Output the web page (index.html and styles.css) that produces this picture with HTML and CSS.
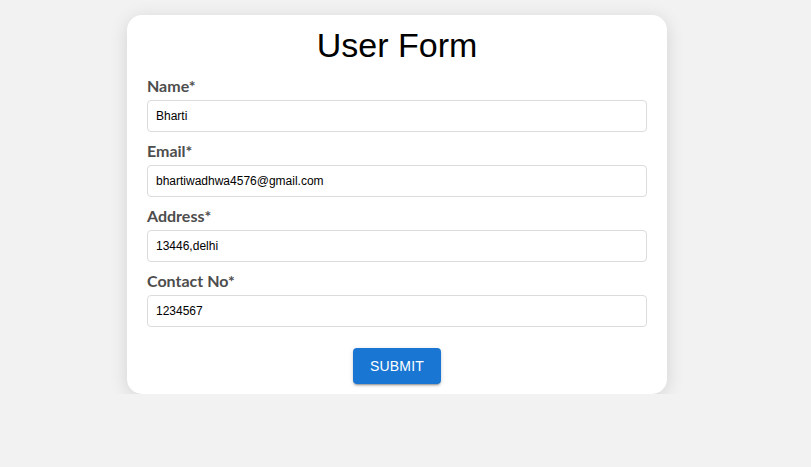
FILE: index.html
```
<!DOCTYPE html>
<html>
<head>
<meta charset="utf-8">
<link rel="stylesheet" href="styles.css">
</head>
<body>
<div class="page">
  <form class="card">
    <h1 class="title">User Form</h1>
    <div class="field">
      <label class="label">Name*</label>
      <input class="input" type="text" value="Bharti">
    </div>
    <div class="field">
      <label class="label">Email*</label>
      <input class="input" type="text" value="bhartiwadhwa4576@gmail.com">
    </div>
    <div class="field">
      <label class="label">Address*</label>
      <input class="input" type="text" value="13446,delhi">
    </div>
    <div class="field">
      <label class="label">Contact No*</label>
      <input class="input" type="text" value="1234567">
    </div>
    <div class="actions">
      <button class="btn" type="button">Submit</button>
    </div>
  </form>
</div>
</body>
</html>
```
FILE: styles.css
```
html, body {
  margin: 0;
  padding: 0;
  background: #f2f2f2;
  font-family: "Liberation Sans", Arial, sans-serif;
}
.page {
  display: flex;
  justify-content: center;
  padding-top: 15px;
  padding-right: 17px;
}
.card {
  width: 540px;
  box-sizing: border-box;
  background: #fff;
  border-radius: 15px;
  box-shadow: 0 3px 18px rgba(0, 0, 0, 0.13);
  padding: 0 20px 10px;
  display: flex;
  flex-direction: column;
}
.title {
  margin: 8px 0 9px;
  font-size: 34px;
  line-height: 44px;
  font-weight: 400;
  text-align: center;
  color: #000;
}
.field {
  display: flex;
  flex-direction: column;
  gap: 4px;
  margin-bottom: 9px;
}
.label {
  font-family: Lato, "Open Sans", sans-serif;
  font-weight: 700;
  font-size: 16px;
  line-height: 20px;
  color: #4d4d4d;
}
.input {
  height: 32px;
  box-sizing: border-box;
  border: 1px solid #dcdcdc;
  border-radius: 4px;
  padding: 0 8px;
  font-family: "Liberation Sans", Arial, sans-serif;
  font-size: 12px;
  color: #000;
  outline: none;
}
.actions {
  display: flex;
  justify-content: center;
  margin-top: 12px;
}
.btn {
  height: 36px;
  width: 88px;
  border: none;
  border-radius: 4px;
  background: #1976d2;
  color: #fff;
  font-family: "Liberation Sans", Arial, sans-serif;
  font-size: 14px;
  letter-spacing: 0.2px;
  text-transform: uppercase;
  box-shadow: 0 3px 1px -2px rgba(0,0,0,0.2), 0 2px 2px 0 rgba(0,0,0,0.14), 0 1px 5px 0 rgba(0,0,0,0.12);
  cursor: pointer;
}
```
